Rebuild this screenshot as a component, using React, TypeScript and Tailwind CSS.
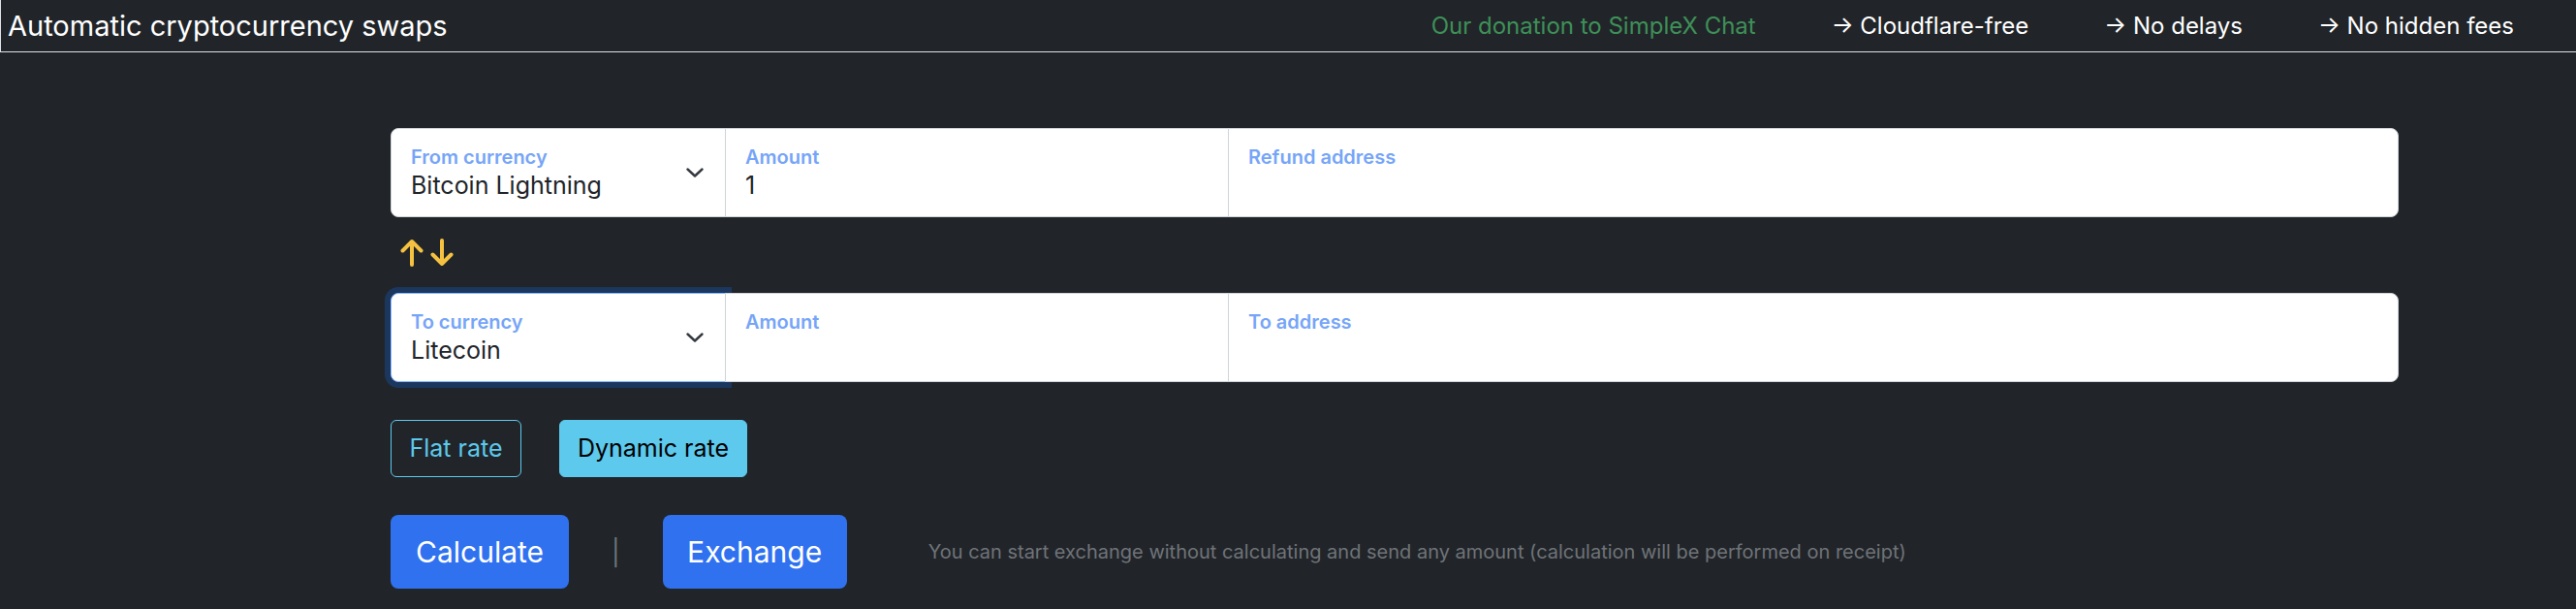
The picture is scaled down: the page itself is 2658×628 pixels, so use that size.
import React from "react";

function Chevron() {
  return (
    <svg width="18" height="10" viewBox="0 0 18 10" fill="none" className="shrink-0">
      <path d="M1.5 1.5 L9 8.5 L16.5 1.5" stroke="#343a40" strokeWidth="2.4" strokeLinecap="round" strokeLinejoin="round" />
    </svg>
  );
}

function Field({
  label,
  value,
  className,
  select,
}: {
  label: string;
  value?: string;
  className: string;
  select?: boolean;
}) {
  return (
    <div className={"flex h-[92px] items-center bg-white pl-[20px] pr-[22px] " + className}>
      <div className="flex h-full flex-1 flex-col gap-[2px] pt-[17px]">
        <div className="text-[20px] leading-[24px] font-semibold text-[#76a5f8]">{label}</div>
        <div className="text-[25px] leading-[30px] text-[#212529]">{value ?? ""}</div>
      </div>
      {select ? <Chevron /> : null}
    </div>
  );
}

function Arrows() {
  return (
    <div className="flex h-[28px] items-center gap-[7px] pl-[10px]">
      <svg width="24" height="29" viewBox="0 0 24 29" fill="none">
        <path d="M12 27 V3 M2.5 12.5 L12 3 L21.5 12.5" stroke="#f5c141" strokeWidth="4" strokeLinecap="round" strokeLinejoin="round" />
      </svg>
      <svg width="24" height="29" viewBox="0 0 24 29" fill="none">
        <path d="M12 2 V26 M2.5 16.5 L12 26 L21.5 16.5" stroke="#f5c141" strokeWidth="4" strokeLinecap="round" strokeLinejoin="round" />
      </svg>
    </div>
  );
}

export default function App() {
  return (
    <div className="h-[628px] w-[2658px] overflow-hidden bg-[#212529] font-['Inter','Liberation_Sans',sans-serif]">
      <header className="flex h-[54px] items-center border-b border-l border-[#dee2e6] pl-[7px] pr-[64px]">
        <div className="text-[29px] leading-[36px] text-white">Automatic cryptocurrency swaps</div>
        <nav className="ml-auto flex items-center gap-[78px] text-[24px] leading-[30px]">
          <span className="text-[#3e9058]">Our donation to SimpleX Chat</span>
          <span className="text-white">→ Cloudflare-free</span>
          <span className="text-white">→ No delays</span>
          <span className="text-white">→ No hidden fees</span>
        </nav>
      </header>

      <main className="pl-[403px] pt-[78px]">
        <div className="flex w-[2072px]">
          <Field label="From currency" value="Bitcoin Lightning" select className="w-[346px] rounded-l-[8px] border border-[#ced4da]" />
          <Field label="Amount" value="1" className="-ml-px w-[520px] border border-[#ced4da]" />
          <Field label="Refund address" className="-ml-px flex-1 rounded-r-[8px] border border-[#ced4da]" />
        </div>

        <div className="pt-[22px] pb-[28px]">
          <Arrows />
        </div>

        <div className="flex w-[2072px]">
          <Field label="To currency" value="Litecoin" select className="w-[346px] rounded-l-[8px] border border-[#86b7fe] shadow-[0_0_0_6px_rgba(13,110,253,0.25)]" />
          <Field label="Amount" className="-ml-px w-[520px] border border-[#ced4da]" />
          <Field label="To address" className="-ml-px flex-1 rounded-r-[8px] border border-[#ced4da]" />
        </div>

        <div className="flex gap-[39px] pt-[39px]">
          <button className="flex h-[59px] w-[135px] items-center justify-center rounded-[6px] border border-[#5dc9ec] text-[25px] text-[#5dc9ec]">
            Flat rate
          </button>
          <button className="flex h-[59px] w-[194px] items-center justify-center rounded-[6px] border border-[#5dc9ec] bg-[#5dc9ec] text-[25px] text-black">
            Dynamic rate
          </button>
        </div>

        <div className="flex items-center pt-[39px]">
          <button className="flex h-[76px] w-[184px] items-center justify-center rounded-[8px] bg-[#3071f0] text-[30px] text-white">
            Calculate
          </button>
          <span className="mx-[44px] text-[26px] text-[#6c757d]">|</span>
          <button className="flex h-[76px] w-[190px] items-center justify-center rounded-[8px] bg-[#3071f0] text-[30px] text-white">
            Exchange
          </button>
          <span className="ml-[84px] text-[20px] text-[#6f7378]">
            You can start exchange without calculating and send any amount (calculation will be performed on receipt)
          </span>
        </div>
      </main>
    </div>
  );
}
